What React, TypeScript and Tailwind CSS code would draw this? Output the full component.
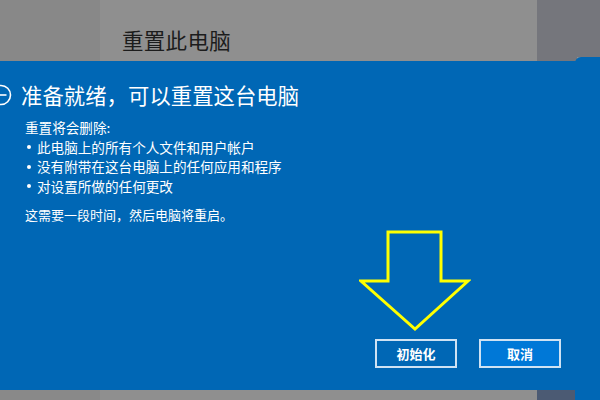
import React from 'react';

const FONT = { fontFamily: '"Noto Sans CJK SC", "Noto Sans", sans-serif' };

const bullets = [
  '此电脑上的所有个人文件和用户帐户',
  '没有附带在这台电脑上的任何应用和程序',
  '对设置所做的任何更改',
];

const BackIcon = () => (
  <svg width="12" height="22" viewBox="-1 -11 12 22" className="shrink-0">
    <circle cx="0" cy="0" r="9.5" fill="none" stroke="white" strokeWidth="1.6" />
    <line x1="-6" y1="0" x2="5.5" y2="0" stroke="white" strokeWidth="1.6" />
  </svg>
);

const YellowArrow = () => (
  <svg width="112" height="102" viewBox="0 0 112 102" className="absolute left-[359px] top-[169px]">
    <polygon
      points="29,2 82,2 82,51 109,51 56,99 2,51 29,51"
      fill="none"
      stroke="#ffff00"
      strokeWidth="3"
      strokeLinejoin="miter"
    />
  </svg>
);

export default function App() {
  return (
    <div className="w-[600px] h-[400px] overflow-hidden flex bg-[#8f8f8f]" style={FONT}>
      {/* main window column */}
      <div className="w-[577px] flex flex-col">
        <div className="h-[61px] flex">
          <div className="w-[100px] bg-[#888888]" />
          <div className="w-[437px] bg-[#8f8f8f] pl-[22px] pt-[25px]">
            <div className="text-[21.5px] leading-[30px] text-[#1c1c1c] tracking-[0.3px]">重置此电脑</div>
          </div>
          <div className="flex-1 bg-[#75767c]" />
        </div>

        <div className="relative h-[329px] bg-[#0067b5] flex flex-col text-white">
          <div className="flex items-center gap-[9px] pt-[20px] h-[48px]">
            <BackIcon />
            <div className="text-[21.3px] leading-[28px] tracking-[0.1px]">准备就绪，可以重置这台电脑</div>
          </div>

          <div className="pl-[25px] pt-[9px] text-[13.6px] leading-[19.5px]">
            <div>重置将会删除:</div>
            {bullets.map((b) => (
              <div key={b} className="flex items-center">
                <span className="w-[4px] h-[4px] rounded-full bg-white ml-[2px] mr-[6px] shrink-0" />
                <span>{b}</span>
              </div>
            ))}
            <div className="mt-[9px] text-[13px]">这需要一段时间，然后电脑将重启。</div>
          </div>

          <div className="mt-auto flex justify-end gap-[22px] pr-[16px] pb-[22px]">
            <button className="w-[82px] h-[29px] border-2 border-[#cfe2f3] bg-[#0067b5] text-[13px] font-semibold text-white">
              初始化
            </button>
            <button className="w-[82px] h-[29px] border-2 border-[#cfe2f3] bg-[#0078d7] text-[13px] font-semibold text-white">
              取消
            </button>
          </div>

          <YellowArrow />
        </div>

        <div className="flex-1 flex">
          <div className="w-[100px] bg-[#898989]" />
          <div className="w-[437px] bg-[#8f8f8f]" />
          <div className="flex-1 bg-[#4b5a73]" />
        </div>
      </div>

      {/* window behind, right edge */}
      <div className="flex-1 flex flex-col">
        <div className="h-[57px] bg-[#75767c]" />
        <div className="flex-1 bg-[#0067b5] rounded-tl-[6px] -ml-[2px]" />
      </div>
    </div>
  );
}
